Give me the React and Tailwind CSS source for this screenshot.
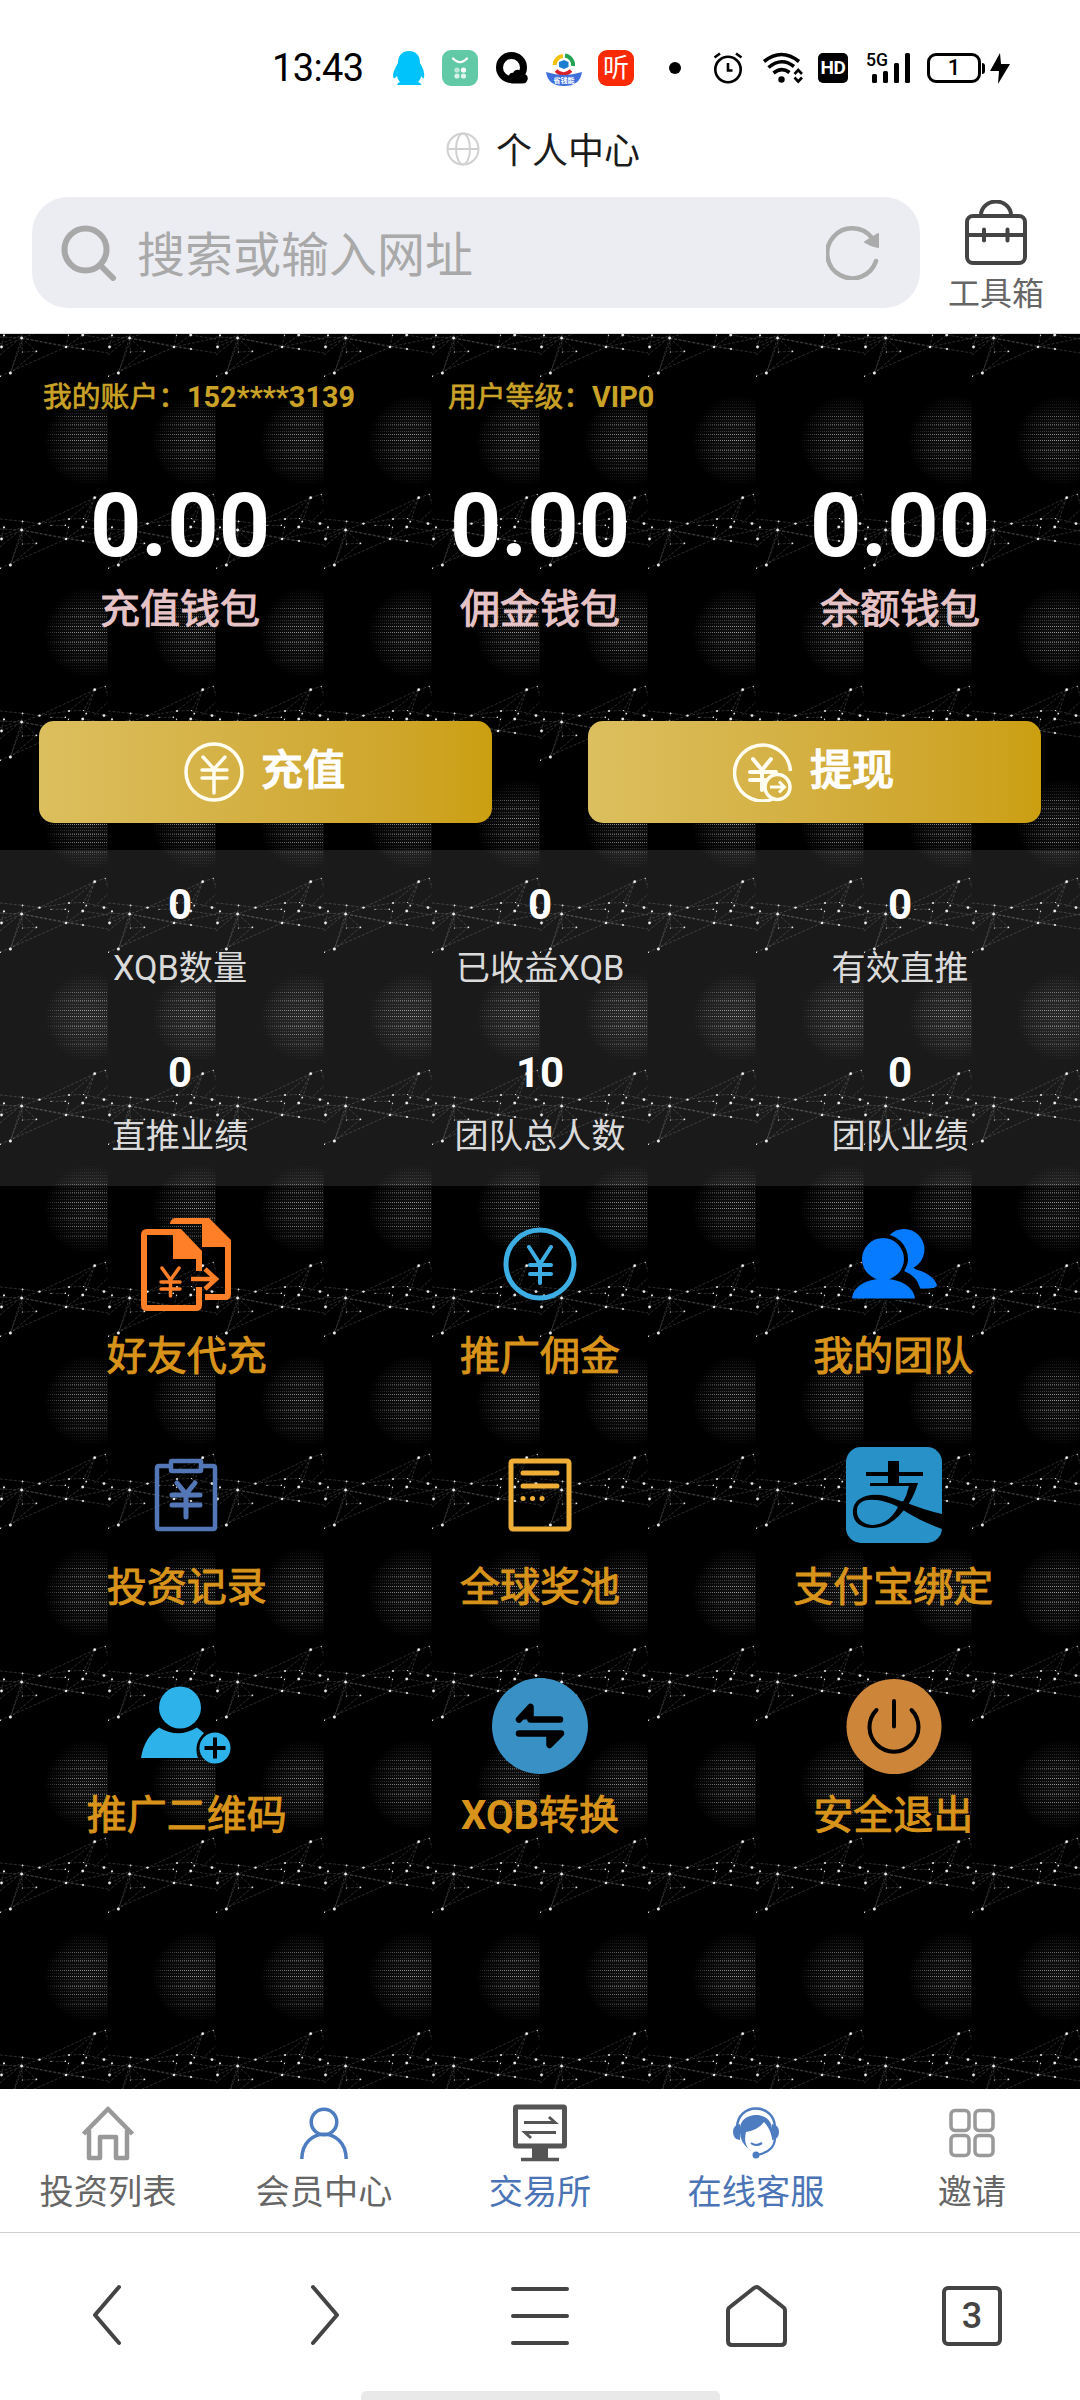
import React from "react";

const NET_LINES = [
  [94.7, 163.7, 39.5, 189.6], [94.7, 163.7, 69, 185], [94.7, 163.7, 83.5, 184.5],
  [94.7, 163.7, 105.3, 160.3], [94.7, 163.7, 86.3, 187.6], [105.3, 160.3, 108, 170], [69, 185, 83.5, 184.5], [39.5, 189.6, 69, 185],
  [83.5, 184.5, 86.3, 187.6], [22.5, 187.3, 39.5, 189.6], [0, 185, 22.5, 187.3], [51, 191.3, 65.3, 191.3],
  [39.5, 189.6, 21.6, 196], [22.5, 187.3, 21.6, 196], [86.3, 187.6, 82.7, 193], [82.7, 193, 108, 197],
  [82.7, 193, 66, 205], [68.5, 193.3, 66, 205], [83, 184.5, 108, 190], [94, 189, 108, 176],
  [21.6, 196, 66, 205], [66, 205, 83, 207], [83, 207, 108, 211], [66, 205, 108, 196], [0, 195, 21.6, 196],
  [21.6, 196, 22.4, 210], [22.4, 210, 36.4, 209.3], [21.6, 196, 10.4, 231], [22.4, 199, 10.4, 231],
  [21.6, 196, 36.4, 209.3], [36.4, 209.3, 10.4, 231], [0, 234.3, 66, 205], [1.5, 205, 21.6, 196],
  [4, 193.3, 1.5, 205], [0, 213, 18, 198], [0, 202, 20, 194], [21.6, 196, 83, 207],
];
const NET_DOTS = [
  [94.7, 163.7, 1.4], [105.3, 160.3, 0.6], [39.5, 189.6, 1.2], [69, 185, 1], [83.5, 184.5, 0.6], [86.3, 187.6, 0.9],
  [104, 189.6, 1.4], [22.5, 187.3, 0.9], [4, 193.3, 1.1], [21.6, 196, 1.4], [51, 191.3, 0.6], [65.3, 191.3, 0.8],
  [68.5, 193.3, 0.7], [82.7, 193, 1.4], [1.5, 205, 1.4], [66, 205, 1.2], [83, 207, 1.1], [36.4, 209.3, 0.9],
  [22.4, 210, 0.6], [10.4, 231, 1.5], [0.4, 234.3, 0.7],
];
const GLOW_ROWS = Array.from({ length: 31 }, (_, i) => 64.5 + i * 3);
const BRIGHT_ROWS = [82.5, 90.5, 100.5, 106.5, 116.5, 124.5, 134.5];

function Net() {
  return (
    <g>
      {NET_LINES.map((l, i) => (
        <line key={i} x1={l[0]} y1={l[1]} x2={l[2]} y2={l[3]} stroke="#fff" strokeOpacity="0.24" strokeWidth="0.7" strokeDasharray="3 1.6" />
      ))}
      {NET_DOTS.map((d, i) => (
        <circle key={i} cx={d[0]} cy={d[1]} r={d[2]} fill="#fff" fillOpacity="0.9" />
      ))}
    </g>
  );
}

function Backdrop() {
  return (
    <svg className="absolute inset-0 h-full w-full" aria-hidden="true">
      <defs>
        <radialGradient id="glow" gradientUnits="userSpaceOnUse" cx="90" cy="107" r="46">
          <stop offset="0" stopColor="#fff" stopOpacity="0.5" />
          <stop offset="0.45" stopColor="#fff" stopOpacity="0.34" />
          <stop offset="0.8" stopColor="#fff" stopOpacity="0.14" />
          <stop offset="1" stopColor="#fff" stopOpacity="0" />
        </radialGradient>
        <pattern id="tile" width="108" height="192" patternUnits="userSpaceOnUse">
          <rect x="44" y="60" width="64" height="94" fill="url(#glow)" opacity="0.14" />
          <g stroke="url(#glow)" strokeWidth="1" shapeRendering="crispEdges">
            {GLOW_ROWS.map((y) => (
              <line key={y} x1="44" x2="108" y1={y} y2={y} strokeDasharray="1 1" strokeOpacity="0.55" />
            ))}
            {BRIGHT_ROWS.map((y) => (
              <line key={y} x1="44" x2="108" y1={y} y2={y} strokeDasharray="1 1" />
            ))}
          </g>
          <Net />
          <g transform="translate(0 -192)"><Net /></g>
        </pattern>
      </defs>
      <rect width="100%" height="100%" fill="#000" />
      <rect width="100%" height="100%" fill="url(#tile)" />
    </svg>
  );
}

function StatusBar() {
  return (
    <div className="flex h-[118px] items-center pt-[18px] pl-[272px] text-black">
      <span className="w-[94px] text-[38px] leading-[40px] tracking-[-0.6px]">13:43</span>
      <svg className="ml-[26px]" width="33" height="36" viewBox="0 0 33 36">
        <path d="M17 1C9.500 1 6 6 6 13C3 18 0 24 1.500 28C3 29 5 26 5 26C5.500 29 7 31 8 32C5 33 5 35 6 35H29C30 35 29 33 26 32C28 30 29 28 29 26C30 27 31 29 32 28C33 23 31 18 28 13C28 6 24.500 1 17 1Z" fill="#00c3fb" />
      </svg>
      <svg className="ml-[17px]" width="36" height="36" viewBox="0 0 36 36">
        <rect width="36" height="36" rx="9" fill="#62c9a6" />
        <path d="M11 8.500Q18 16 25 8.500" fill="none" stroke="#fff" strokeWidth="2.200" strokeLinecap="round" />
        <g fill="#fff">
          <circle cx="15" cy="20" r="2.600" opacity=".6" /><circle cx="21.500" cy="20" r="2.600" />
          <circle cx="15" cy="26" r="2.600" opacity=".75" /><circle cx="21.500" cy="26" r="2.600" opacity=".8" />
        </g>
      </svg>
      <svg className="ml-[18px]" width="32" height="32" viewBox="0 0 32 32">
        <circle cx="15.500" cy="15.500" r="12" fill="none" stroke="#000" strokeWidth="7" />
        <path d="M14 27C11 22 16 20 17 21C19 16 26 17 26 22C31 21 33 26 31 29C30 31.500 27 31.500 26 31.500H15Z" fill="#000" />
      </svg>
      <svg className="ml-[18px]" width="36" height="36" viewBox="0 0 36 36">
        <path d="M8.500 15A9.500 9.500 0 0 1 17 6" fill="none" stroke="#f4c20d" strokeWidth="4" />
        <path d="M19 5.500A9.500 9.500 0 0 1 27 16" fill="none" stroke="#23a455" strokeWidth="4" />
        <path d="M25 20.500A10 10 0 0 1 10 20.500" fill="none" stroke="#d8232a" strokeWidth="3.500" />
        <path d="M13 12L18 10L22.500 12V17L18 19L13 17Z" fill="#1e7fd0" />
        <path d="M0 22Q10 25 18 25T36 22Q34 36 18 36T0 22Z" fill="#3f6fdc" />
        <text x="18" y="33" textAnchor="middle" fontSize="7" fontWeight="700" fill="#fff" fontFamily="Noto Sans CJK SC, sans-serif">省钱能</text>
      </svg>
      <div className="ml-[16px] flex h-[36px] w-[36px] items-center justify-center rounded-[9px] bg-[#fb2a06] text-[26px] leading-[30px] text-white">听</div>
      <div className="ml-[35px] h-[12px] w-[12px] rounded-full bg-black" />
      <svg className="ml-[32px]" width="30" height="32" viewBox="0 0 30 32" fill="none" stroke="#000" strokeWidth="2.600">
        <circle cx="15" cy="17.500" r="12.700" />
        <path d="M15 11V18.500H19.500M1.500 5.500L7 1.500M28.500 5.500L23 1.500" />
      </svg>
      <svg className="ml-[19px]" width="42" height="32" viewBox="0 0 42 32" fill="none" stroke="#000" strokeWidth="3.600">
        <path d="M2 9.500Q19.500-4.500 37 9.500M6.500 15.500Q19.500 4.500 32 14.500M11.500 21Q19.500 14.500 27.500 20.500" />
        <circle cx="19.500" cy="27.500" r="3.200" fill="#000" stroke="none" />
        <path d="M32.500 22L36.200 18L40 22M32.500 25.500L36.200 29.500L40 25.500" strokeWidth="2.600" />
      </svg>
      <div className="ml-[14px] flex h-[30px] w-[30px] items-center justify-center rounded-[5px] bg-black text-[19px] font-bold leading-[24px] tracking-[-0.5px] text-white">HD</div>
      <svg className="ml-[18px]" width="46" height="40" viewBox="0 -4 46 40">
        <text x="0" y="14" fontSize="19" fontWeight="500" textLength="22" lengthAdjust="spacingAndGlyphs" fontFamily="Roboto, sans-serif">5G</text>
        <rect x="6" y="22" width="5" height="9" rx="1.500" /><rect x="17" y="19" width="5" height="12" rx="1.500" />
        <rect x="28" y="11" width="5" height="20" rx="1.500" /><rect x="39" y="1" width="5" height="30" rx="1.500" />
      </svg>
      <div className="ml-[15px] flex h-[30px] w-[54px] items-center justify-center rounded-[9px] border-[3px] border-black text-[22px] leading-[24px] font-medium">1</div>
      <div className="ml-[1px] h-[11px] w-[3px] rounded-r bg-black" />
      <svg className="ml-[5px]" width="20" height="31" viewBox="0 0 20 31"><path d="M10 0L0 18H9L8 31L20 11H11Z" /></svg>
    </div>
  );
}

function BrowserHeader() {
  return (
    <header className="h-[334px] border-b border-[#dcdcdc] bg-white">
      <StatusBar />
      <div className="flex h-[62px] items-center pl-[446px]">
        <svg width="34" height="34" viewBox="0 0 34 34" fill="none" stroke="#d0d0d0" strokeWidth="2">
          <circle cx="17" cy="17" r="15.500" /><ellipse cx="17" cy="17" rx="7" ry="15.500" /><path d="M1.500 17H32.500" />
        </svg>
        <h1 className="ml-[16px] mt-[5px] text-[36px] leading-[40px] text-[#1c1c1c]">个人中心</h1>
      </div>
      <div className="flex pt-[17px] pl-[32px]">
        <div className="flex h-[111px] w-[888px] items-center rounded-[36px] bg-[#ecedf2] pl-[29px] pr-[40px]">
          <svg width="56" height="56" viewBox="0 0 56 56" fill="none" stroke="#a8a8a8" strokeWidth="6" strokeLinecap="round">
            <circle cx="24.500" cy="24.500" r="21" /><path d="M41 42L52 53" />
          </svg>
          <span className="ml-[20px] mt-[6px] flex-1 text-[48px] leading-[60px] text-[#a9a9a9]">搜索或输入网址</span>
          <svg width="54" height="54" viewBox="0 0 54 54">
            <path d="M50 35A25 25 0 1 1 46 12" fill="none" stroke="#ababab" strokeWidth="4.500" strokeLinecap="round" />
            <path d="M52 8V21Q45 20 39 16Z" fill="#ababab" stroke="#ababab" strokeWidth="2" strokeLinejoin="round" />
          </svg>
        </div>
        <div className="ml-[28px] flex w-[96px] flex-col items-center pt-[3px]">
          <svg width="62" height="65" viewBox="0 0 62 65" fill="none" stroke="#444" strokeWidth="4" strokeLinecap="round">
            <rect x="2" y="16" width="58" height="47" rx="6" />
            <path d="M16 15A15 13.500 0 0 1 46 15M2 35H60M19 29.500V40.500M42.500 29.500V40.500" />
          </svg>
          <span className="mt-[9px] text-[32px] leading-[40px] text-[#666]">工具箱</span>
        </div>
      </div>
    </header>
  );
}

const Yen = ({ d, w }) => <path d={d} strokeWidth={w} fill="none" strokeLinecap="round" />;

function ActionButton({ label, withdraw }) {
  return (
    <button className="flex h-[102px] w-[453px] items-center justify-center gap-[17px] rounded-[15px] bg-linear-to-r from-[#dcbf5e] to-[#cb9f0f] pr-[2px] text-white">
      <svg width="60" height="60" viewBox="0 0 60 60" fill="none" stroke="#fffef0" strokeWidth="3.500">
        {withdraw ? (
          <>
            <path d="M57.500 29A28 28 0 1 0 40 57" />
            <Yen w={4} d="M20 17L29 28L38 17M17 30H43M17 38H32M29 28V48" />
            <circle cx="44.500" cy="45" r="12.500" />
            <path d="M37 45H51M46 39.500L51.500 45L46 50.500" strokeWidth="3" />
          </>
        ) : (
          <>
            <circle cx="30" cy="30" r="28" />
            <Yen w={3.500} d="M19 15L30 27L41 15M18 28H43M18 36H43M30 27V51" />
          </>
        )}
      </svg>
      <span className="mt-[-3px] text-[42px] font-medium leading-[60px] [-webkit-text-stroke:1.2px_currentColor]">{label}</span>
    </button>
  );
}

const MENU = [
  {
    label: "好友代充",
    icon: (
      <svg className="mt-[2px] ml-[1px]" width="92" height="96" viewBox="0 0 92 96" fill="none" stroke="#fe7f27" strokeWidth="6">
        <path d="M34 15H6Q3 15 3 18V88Q3 91 6 91H55Q58 91 58 88V70M58 54V38" />
        <path d="M32 12H40L61 34V42H32Z" fill="#fe7f27" stroke="none" />
        <path d="M29 6.500Q30 1 35 1H68L90 23V30H61V7H29Z" fill="#fe7f27" stroke="none" />
        <path d="M87 28V77Q87 80 84 80H64" />
        <path d="M50 62H75M64 52L75 62L64 72" strokeWidth="4.500" />
        <Yen w={3.500} d="M21 51L29.500 63L38 51M20 65H39M20 72H39M29.500 63V79" />
      </svg>
    ),
  },
  {
    label: "推广佣金",
    icon: (
      <svg width="74" height="74" viewBox="0 0 74 74" fill="none" stroke="#3caee3" strokeWidth="5">
        <circle cx="37" cy="37" r="34" />
        <Yen w={4} d="M26 20L37 37L48 20M27 38H48M27 47H48M37 37V56" />
      </svg>
    ),
  },
  {
    label: "我的团队",
    icon: (
      <svg className="ml-[1px]" width="86" height="72" viewBox="0 0 86 72" fill="#067bff">
        <circle cx="53" cy="21.500" r="20.500" />
        <path d="M54 36H62Q61 41 67 42C79 46 85 52 86 58Q84 61 68 60.500Q64 50 53 46Z" />
        <path d="M32 6A25 25 0 0 1 57 31Q57 37 53 43Q66 48 69 60L71 72H30Z" fill="#000" />
        <circle cx="32" cy="31" r="21" />
        <path d="M1 70.500C3 44 61 44 64 70.500Z" />
      </svg>
    ),
  },
  {
    label: "投资记录",
    icon: (
      <svg className="mr-[1px]" width="64" height="74" viewBox="0 0 64 74" fill="none" stroke="#5377b6" strokeWidth="4.500">
        <path d="M15 8H5Q3 8 3 10V69Q3 71 5 71H59Q61 71 61 69V10Q61 8 59 8H49" />
        <rect x="17" y="3" width="30" height="10" rx="1" />
        <Yen w={5} d="M23 25L32 36L41 25M18 37H46M18 47H46M32 37V59" />
      </svg>
    ),
  },
  {
    label: "全球奖池",
    icon: (
      <svg className="ml-[1px]" width="64" height="74" viewBox="0 0 64 74" fill="none" stroke="#eeae38" strokeWidth="5" strokeLinecap="round">
        <rect x="3" y="3" width="58" height="68" rx="2" />
        <path d="M15 15H49M15 28H49" />
        <path d="M15 40.500H15.100M24.500 40.500H24.600M34 40.500H34.100" />
      </svg>
    ),
  },
  {
    label: "支付宝绑定",
    icon: (
      <svg className="ml-[2px]" width="96" height="96" viewBox="0 0 96 96">
        <rect width="96" height="96" rx="15" fill="#2791c8" />
        <path d="M42 14H53V25H77V29H53V36H72Q67 53 58 63Q44 81 26 81C12 81 6 72 7 63C8 50 24 45 40 49C47 51 52 53 57 55Q61 48 63 39H24V36H42V29H20V25H42ZM52 60C40 53 12 47 11 63C10 72 18 78 27 78Q43 77 52 60Z" fill="#000" fillRule="evenodd" />
        <path d="M56 54Q78 63 96 67V82Q74 74 57 63Z" fill="#000" />
      </svg>
    ),
  },
  {
    label: "推广二维码",
    icon: (
      <svg width="92" height="80" viewBox="0 0 92 80" fill="#2db2e9">
        <circle cx="39" cy="21.500" r="21" />
        <path d="M0 72Q3 52 18 41.500Q37 53 56 41.500L63 47Q52 58 57 72Z" />
        <circle cx="74" cy="62" r="15.500" />
        <path d="M74 51.500V72.500M63.500 62H84.500" stroke="#000" strokeWidth="4" />
      </svg>
    ),
  },
  {
    label: <><b className="font-bold [-webkit-text-stroke:0px]">XQB</b>转换</>,
    icon: (
      <svg width="96" height="96" viewBox="0 0 96 96">
        <circle cx="48" cy="48" r="48" fill="#3990c5" />
        <path d="M27 41.500L38.500 29V41.500H68M27 55.500H69L57.500 67V55.500" stroke="#000" strokeWidth="6.500" strokeLinecap="round" strokeLinejoin="round" fill="none" />
        <path d="M27 41.500L38.500 29V41.500ZM69 55.500L57.500 67V55.500Z" />
      </svg>
    ),
  },
  {
    label: "安全退出",
    icon: (
      <svg className="ml-[2px]" width="96" height="96" viewBox="0 0 96 96">
        <circle cx="48" cy="48.500" r="47.500" fill="#cd8539" />
        <path d="M30.500 32A24.500 24.500 0 1 0 65.500 32M48 23V48.500" stroke="#000" strokeWidth="4" strokeLinecap="round" fill="none" />
      </svg>
    ),
  },
];

const WALLETS = [["0.00", "充值钱包"], ["0.00", "佣金钱包"], ["0.00", "余额钱包"]];
const STATS = [["0", "XQB数量"], ["0", "已收益XQB"], ["0", "有效直推"], ["0", "直推业绩"], ["10", "团队总人数"], ["0", "团队业绩"]];

function Dashboard() {
  return (
    <main className="relative h-[1755px] overflow-hidden bg-black">
      <Backdrop />
      <div className="relative">
        <div className="flex h-[125px] items-center pl-[43px] text-[28.800px] leading-[40px] text-[#c9a227]">
          <div className="w-[405px]"><span className="[-webkit-text-stroke:0.700px_currentColor]">我的账户：</span><b className="font-bold">152****3139</b></div>
          <div><span className="[-webkit-text-stroke:0.700px_currentColor]">用户等级：</span><b className="font-bold">VIP0</b></div>
        </div>
        <div className="grid grid-cols-3 pt-[17px] text-center">
          {WALLETS.map(([n, l]) => (
            <div key={l}>
              <div className="text-[89.500px] font-bold leading-[100px] text-white">{n}</div>
              <div className="mt-[4px] text-[40px] leading-[60px] text-[#e6c3c6] [-webkit-text-stroke:1px_currentColor]">{l}</div>
            </div>
          ))}
        </div>
        <div className="mt-[81px] flex justify-between px-[39px]">
          <ActionButton label="充值" />
          <ActionButton label="提现" withdraw />
        </div>
        <div className="mt-[27px] grid h-[336px] grid-cols-3 bg-white/10 text-center">
          {STATS.map(([n, l]) => (
            <div key={l} className="h-[168px] pt-[30px]">
              <div className="text-[42px] font-bold leading-[50px] text-white">{n}</div>
              <div className="mt-[13px] text-[34.200px] leading-[50px] text-[#dadada]">{l}</div>
            </div>
          ))}
        </div>
        <div className="grid grid-cols-3 px-[10px] pt-[30px]">
          {MENU.map((m, i) => (
            <div key={i} className="flex h-[231px] flex-col items-center">
              <div className="flex h-[96px] items-center">{m.icon}</div>
              <div className={(i > 5 ? "mt-[12px]" : "mt-[15px]") + " text-[40px] leading-[60px] text-[#d8931a] [-webkit-text-stroke:1px_currentColor]"}>{m.label}</div>
            </div>
          ))}
        </div>
      </div>
    </main>
  );
}

const TABS = [
  {
    label: "投资列表",
    tone: "text-[#666]",
    icon: (
      <svg width="54" height="56" viewBox="0 0 54 56" fill="none" stroke="#999" strokeWidth="4.500" strokeLinejoin="round">
        <path d="M2.500 29L27 4L51.500 29M8 25V53H19V32H35V53H46V25" />
      </svg>
    ),
  },
  {
    label: "会员中心",
    tone: "text-[#666]",
    icon: (
      <svg width="48" height="52" viewBox="0 0 48 52" fill="none" stroke="#4d7cc0" strokeWidth="3.500">
        <circle cx="24" cy="15" r="12.800" /><path d="M1.800 52C2 19 46 19 46.200 52" />
      </svg>
    ),
  },
  {
    label: "交易所",
    tone: "text-[#4b74b6]",
    icon: (
      <svg width="54" height="58" viewBox="0 0 54 58" fill="none" stroke="#555" strokeWidth="5">
        <rect x="2.500" y="3" width="49" height="39" rx="1" />
        <path d="M19 43H35V54H19Z" fill="#555" stroke="none" />
        <path d="M8 55.500H46" strokeWidth="3.500" />
        <path d="M11 18.500H42L36 13M43 28.500H12L18 34" strokeWidth="3" />
      </svg>
    ),
  },
  {
    label: "在线客服",
    tone: "text-[#4b74b6]",
    icon: (
      <svg width="48" height="54" viewBox="0 0 48 54" fill="#4d7cc0">
        <path d="M5 22C5-4 43-4 43 22" fill="none" stroke="#4d7cc0" strokeWidth="2.500" />
        <path d="M8 18V34Q1 33 1 26T8 18ZM40 18V34Q47 33 47 26T40 18Z" />
        <path d="M8 24C7 4 41 4 40 24V32Q38 22 32 16Q26 24 14 26Q11 38 18 44Q7 36 8 24Z" />
        <path d="M19 37Q24 41 30 37M43 33Q42 45 27 48.500" fill="none" stroke="#4d7cc0" strokeWidth="2.200" />
        <circle cx="24" cy="49" r="3.500" />
      </svg>
    ),
  },
  {
    label: "邀请",
    tone: "text-[#666]",
    icon: (
      <svg width="46" height="50" viewBox="0 0 46 50" fill="none" stroke="#999" strokeWidth="3.500">
        <rect x="2" y="2.500" width="18" height="20" rx="4" /><rect x="26" y="2.500" width="18" height="20" rx="4" />
        <rect x="2" y="27.500" width="18" height="20" rx="4" /><rect x="26" y="27.500" width="18" height="20" rx="4" />
      </svg>
    ),
  },
];

function TabBar() {
  return (
    <nav className="grid h-[144px] grid-cols-5 border-b border-[#cfcfcf] bg-white">
      {TABS.map((t) => (
        <div key={t.label} className="flex flex-col items-center pt-[14px]">
          <div className="flex h-[60px] items-center">{t.icon}</div>
          <span className={"mt-[9px] text-[34.200px] leading-[40px] " + t.tone}>{t.label}</span>
        </div>
      ))}
    </nav>
  );
}

const NAV_ICONS = [
  "M27 3L3 31L27 59",
  "M5 3L29 31L5 59",
  "M4 5H58M4 32H58M4 59H58",
  "M5 23Q3 24 3 27V57Q3 61 7 61H56Q60 61 60 57V27Q60 24 58 23L34 4Q31.500 2 29 4Z",
];

function BrowserNav() {
  return (
    <footer className="flex h-[167px] flex-col items-center justify-between bg-white">
      <div className="grid w-full grid-cols-5 pt-[51px]">
        {NAV_ICONS.map((d, i) => (
          <div key={d} className="flex justify-center">
            <svg width={i < 2 ? 33 : 63} height="64" viewBox={i < 2 ? "0 0 33 64" : "0 0 63 64"} fill="none" stroke="#444" strokeWidth="4" strokeLinecap="round" strokeLinejoin="round">
              <path d={d} />
            </svg>
          </div>
        ))}
        <div className="flex justify-center">
          <div className="mt-[2px] flex h-[60px] w-[60px] items-center justify-center rounded-[6px] border-4 border-[#444] text-[36px] leading-[40px] font-medium text-[#444]">3</div>
        </div>
      </div>
      <div className="h-[9px] w-[359px] rounded-t-[5px] bg-[#e9e9e9]" />
    </footer>
  );
}

export default function App() {
  return (
    <div className="w-[1080px] overflow-hidden bg-white font-['Roboto','Noto_Sans_CJK_SC',sans-serif]">
      <BrowserHeader />
      <Dashboard />
      <TabBar />
      <BrowserNav />
    </div>
  );
}
